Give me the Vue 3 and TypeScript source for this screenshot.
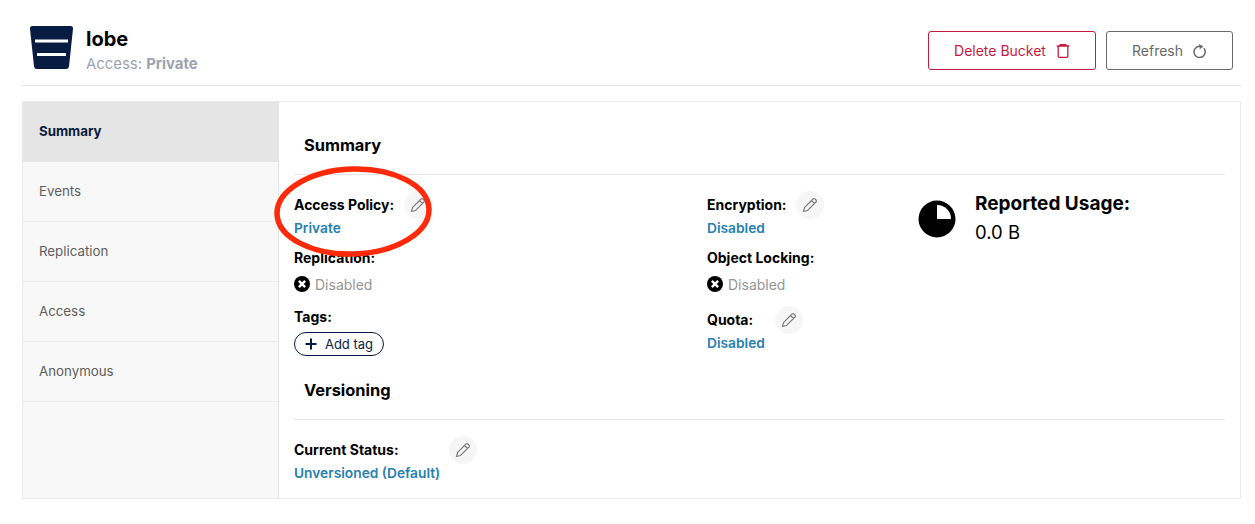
<script setup lang="ts">
const tabs = ['Summary', 'Events', 'Replication', 'Access', 'Anonymous']
const pencil = 'M2.500 15.500 3.500 11.500 12 3a1.400 1.400 0 0 1 2 0l1 1a1.400 1.400 0 0 1 0 2L6.500 14.500 2.500 15.500ZM10.500 4.500l3 3'
</script>

<template>
  <div class="page">
    <header class="head">
      <div class="title-wrap">
        <svg class="logo" viewBox="0 0 44 44" width="44" height="44">
          <path d="M2.500 0h38a2.500 2.500 0 0 1 2.500 2.800L39 40.500a3 3 0 0 1-3 2.500H7a3 3 0 0 1-3-2.500L0 2.800A2.500 2.500 0 0 1 2.500 0Z" fill="#081c42" />
          <rect x="5" y="13.500" width="33" height="3" fill="#fff" />
          <rect x="7" y="27" width="29" height="3" fill="#fff" />
        </svg>
        <div>
          <div class="name">lobe</div>
          <div class="access">Access: <b>Private</b></div>
        </div>
      </div>
      <div class="actions">
        <button class="btn danger">
          Delete Bucket
          <svg viewBox="0 0 14 14" width="14" height="14" fill="none" stroke="currentColor" stroke-width="1.300">
            <path d="M.8 2h12.400M2.200 2v10.300a1 1 0 0 0 1 1h7.600a1 1 0 0 0 1-1V2M4.200 2V.7h5.600V2" />
          </svg>
        </button>
        <button class="btn plain">
          Refresh
          <svg viewBox="0 0 14 14" width="14" height="14" fill="none" stroke="currentColor" stroke-width="1.500">
            <path d="M10.900 4.300A5.600 5.600 0 1 1 7 2.300" />
            <path d="M6 0 10.400 2.400 6.800 5.200Z" fill="currentColor" stroke="none" />
          </svg>
        </button>
      </div>
    </header>

    <div class="panel">
      <nav class="side">
        <div v-for="(t, i) in tabs" :key="t" class="tab" :class="{ active: i === 0 }">{{ t }}</div>
      </nav>
      <main class="body">
        <h3 class="section">Summary</h3>
        <div class="cols">
          <div class="col">
            <div class="item">
              <div class="label">
                <span class="lab-text w-policy">Access Policy:</span>
                <span class="edit"><svg viewBox="0 0 18 18" width="18" height="18" fill="none" stroke="#808080" stroke-width="1.200"><path :d="pencil" /></svg></span>
              </div>
              <div class="link">Private</div>
            </div>
            <div class="item rep">
              <div class="label"><span class="lab-text">Replication:</span></div>
              <div class="state">
                <svg viewBox="0 0 16 16" width="16" height="16"><circle cx="8" cy="8" r="8" fill="#000" /><path d="M4.900 4.900l6.200 6.200M11.100 4.900l-6.200 6.200" stroke="#fff" stroke-width="2.500" /></svg>
                Disabled
              </div>
            </div>
            <div class="item tags">
              <div class="label"><span class="lab-text">Tags:</span></div>
              <div class="chip">
                <svg viewBox="0 0 12 12" width="12" height="12"><path d="M6 .5v11M.5 6h11" stroke="#081c42" stroke-width="2" /></svg>
                Add tag
              </div>
            </div>
          </div>
          <div class="col">
            <div class="item">
              <div class="label">
                <span class="lab-text w-enc">Encryption:</span>
                <span class="edit"><svg viewBox="0 0 18 18" width="18" height="18" fill="none" stroke="#808080" stroke-width="1.200"><path :d="pencil" /></svg></span>
              </div>
              <div class="link">Disabled</div>
            </div>
            <div class="item rep">
              <div class="label"><span class="lab-text">Object Locking:</span></div>
              <div class="state">
                <svg viewBox="0 0 16 16" width="16" height="16"><circle cx="8" cy="8" r="8" fill="#000" /><path d="M4.900 4.900l6.200 6.200M11.100 4.900l-6.200 6.200" stroke="#fff" stroke-width="2.500" /></svg>
                Disabled
              </div>
            </div>
            <div class="item quota">
              <div class="label">
                <span class="lab-text w-quota">Quota:</span>
                <span class="edit"><svg viewBox="0 0 18 18" width="18" height="18" fill="none" stroke="#808080" stroke-width="1.200"><path :d="pencil" /></svg></span>
              </div>
              <div class="link">Disabled</div>
            </div>
          </div>
          <div class="usage">
            <svg viewBox="0 0 38 38" width="38" height="38">
              <circle cx="19" cy="19" r="18.500" fill="#000" />
              <path d="M19 5A14 14 0 0 1 33 19H19Z" fill="#fff" />
            </svg>
            <div>
              <div class="usage-title">Reported Usage:</div>
              <div class="usage-val">0.0 B</div>
            </div>
          </div>
        </div>

        <h3 class="section versioning">Versioning</h3>
        <div class="item status">
          <div class="label">
            <span class="lab-text w-status">Current Status:</span>
            <span class="edit"><svg viewBox="0 0 18 18" width="18" height="18" fill="none" stroke="#808080" stroke-width="1.200"><path :d="pencil" /></svg></span>
          </div>
          <div class="link">Unversioned (Default)</div>
        </div>
      </main>
    </div>

    <svg class="ring" width="168" height="100" viewBox="0 0 168 100" fill="none">
      <ellipse cx="84" cy="50.500" rx="76" ry="42.500" stroke="#ff2a0a" stroke-width="5.500" transform="rotate(-2 84 50.500)" />
    </svg>
  </div>
</template>

<style>
html,
body {
  margin: 0;
  background: #fff;
}
</style>

<style scoped>
.page {
  position: relative;
  width: 1255px;
  height: 524px;
  box-sizing: border-box;
  padding: 0 14px 0 22px;
  font-family: Inter, 'Liberation Sans', sans-serif;
  color: #000;
  overflow: hidden;
}

.head {
  height: 86px;
  box-sizing: border-box;
  border-bottom: 1px solid #e2e2e2;
  display: flex;
  justify-content: space-between;
  align-items: flex-start;
}

.title-wrap {
  display: flex;
  gap: 12px;
  padding: 26px 0 0 8px;
}

.name {
  font-size: 20px;
  font-weight: 700;
  line-height: 24px;
  margin-top: 1px;
}

.access {
  font-size: 14.900px;
  line-height: 20px;
  margin-top: 3px;
  color: #9ca3af;
}

.access b {
  font-weight: 700;
}

.actions {
  display: flex;
  gap: 10px;
  padding: 31px 8px 0 0;
}

.btn {
  height: 39px;
  border-radius: 3px;
  background: #fff;
  font: 400 14px Inter, 'Liberation Sans', sans-serif;
  display: flex;
  align-items: center;
  justify-content: center;
  gap: 10px;
  padding: 0;
}

.danger {
  width: 168px;
  border: 1px solid #c51b3f;
  color: #c51b3f;
}

.plain {
  width: 127px;
  border: 1px solid #696969;
  color: #696969;
}

.panel {
  margin-top: 15px;
  width: 1219px;
  height: 398px;
  box-sizing: border-box;
  border: 1px solid #eaeaea;
  display: flex;
}

.side {
  width: 256px;
  flex: none;
  background: #f8f8f8;
  border-right: 1px solid #e5e5e5;
  box-sizing: border-box;
}

.tab {
  height: 60px;
  box-sizing: border-box;
  padding: 0 0 1px 16px;
  display: flex;
  align-items: center;
  font-size: 13.300px;
  color: #5e5e5e;
  border-bottom: 1px solid #eaeaea;
}

.tab.active {
  background: #e5e5e5;
  color: #081c42;
  font-weight: 700;
  border-bottom: none;
  padding-bottom: 2px;
}

.body {
  flex: 1;
  padding: 0 15px 0 15px;
}

.section {
  margin: 0;
  padding: 32px 0 18px 10px;
  font-size: 16.400px;
  line-height: 22px;
  font-weight: 700;
  border-bottom: 1px solid #e5e5e5;
}

.cols {
  display: grid;
  grid-template-columns: 413px 211px 1fr;
  padding-top: 16px;
}

.label {
  display: flex;
  align-items: center;
  height: 28px;
}

.lab-text {
  font-size: 14px;
  font-weight: 700;
  line-height: 20px;
}

.w-policy {
  width: 110px;
}

.w-enc {
  width: 89px;
}

.w-quota {
  width: 68px;
}

.w-status {
  width: 155px;
}

.edit {
  width: 28px;
  height: 28px;
  border-radius: 50%;
  background: #f6f6f6;
  display: flex;
  align-items: center;
  justify-content: center;
}

.link {
  font-size: 13.750px;
  font-weight: 600;
  line-height: 20px;
  color: #2781b0;
  margin-top: -1px;
}

.rep {
  margin-top: 10px;
}

.rep .label {
  height: 20px;
}

.state {
  display: flex;
  align-items: center;
  gap: 5px;
  height: 20px;
  margin-top: 6px;
  font-size: 14px;
  color: #969696;
}

.tags {
  margin-top: 13px;
}

.tags .label {
  height: 20px;
}

.chip {
  width: 90px;
  height: 24px;
  box-sizing: border-box;
  margin-top: 5px;
  border: 1px solid #081c42;
  border-radius: 12px;
  display: flex;
  align-items: center;
  justify-content: center;
  gap: 8px;
  font-size: 13px;
  color: #081c42;
}

.quota {
  margin-top: 12px;
}

.usage {
  display: flex;
  gap: 19px;
  align-items: flex-start;
  padding-top: 4px;
  position: relative;
}

.usage svg {
  margin-top: 5px;
}

.usage-title {
  font-size: 19px;
  font-weight: 700;
  line-height: 24px;
  margin-top: -3px;
}

.usage-val {
  font-size: 18.500px;
  line-height: 24px;
  margin-top: 4px;
}

.versioning {
  padding-top: 23px;
  padding-bottom: 18px;
}

.status {
  margin-top: 16px;
}

.ring {
  position: absolute;
  left: 269px;
  top: 161px;
}
</style>
